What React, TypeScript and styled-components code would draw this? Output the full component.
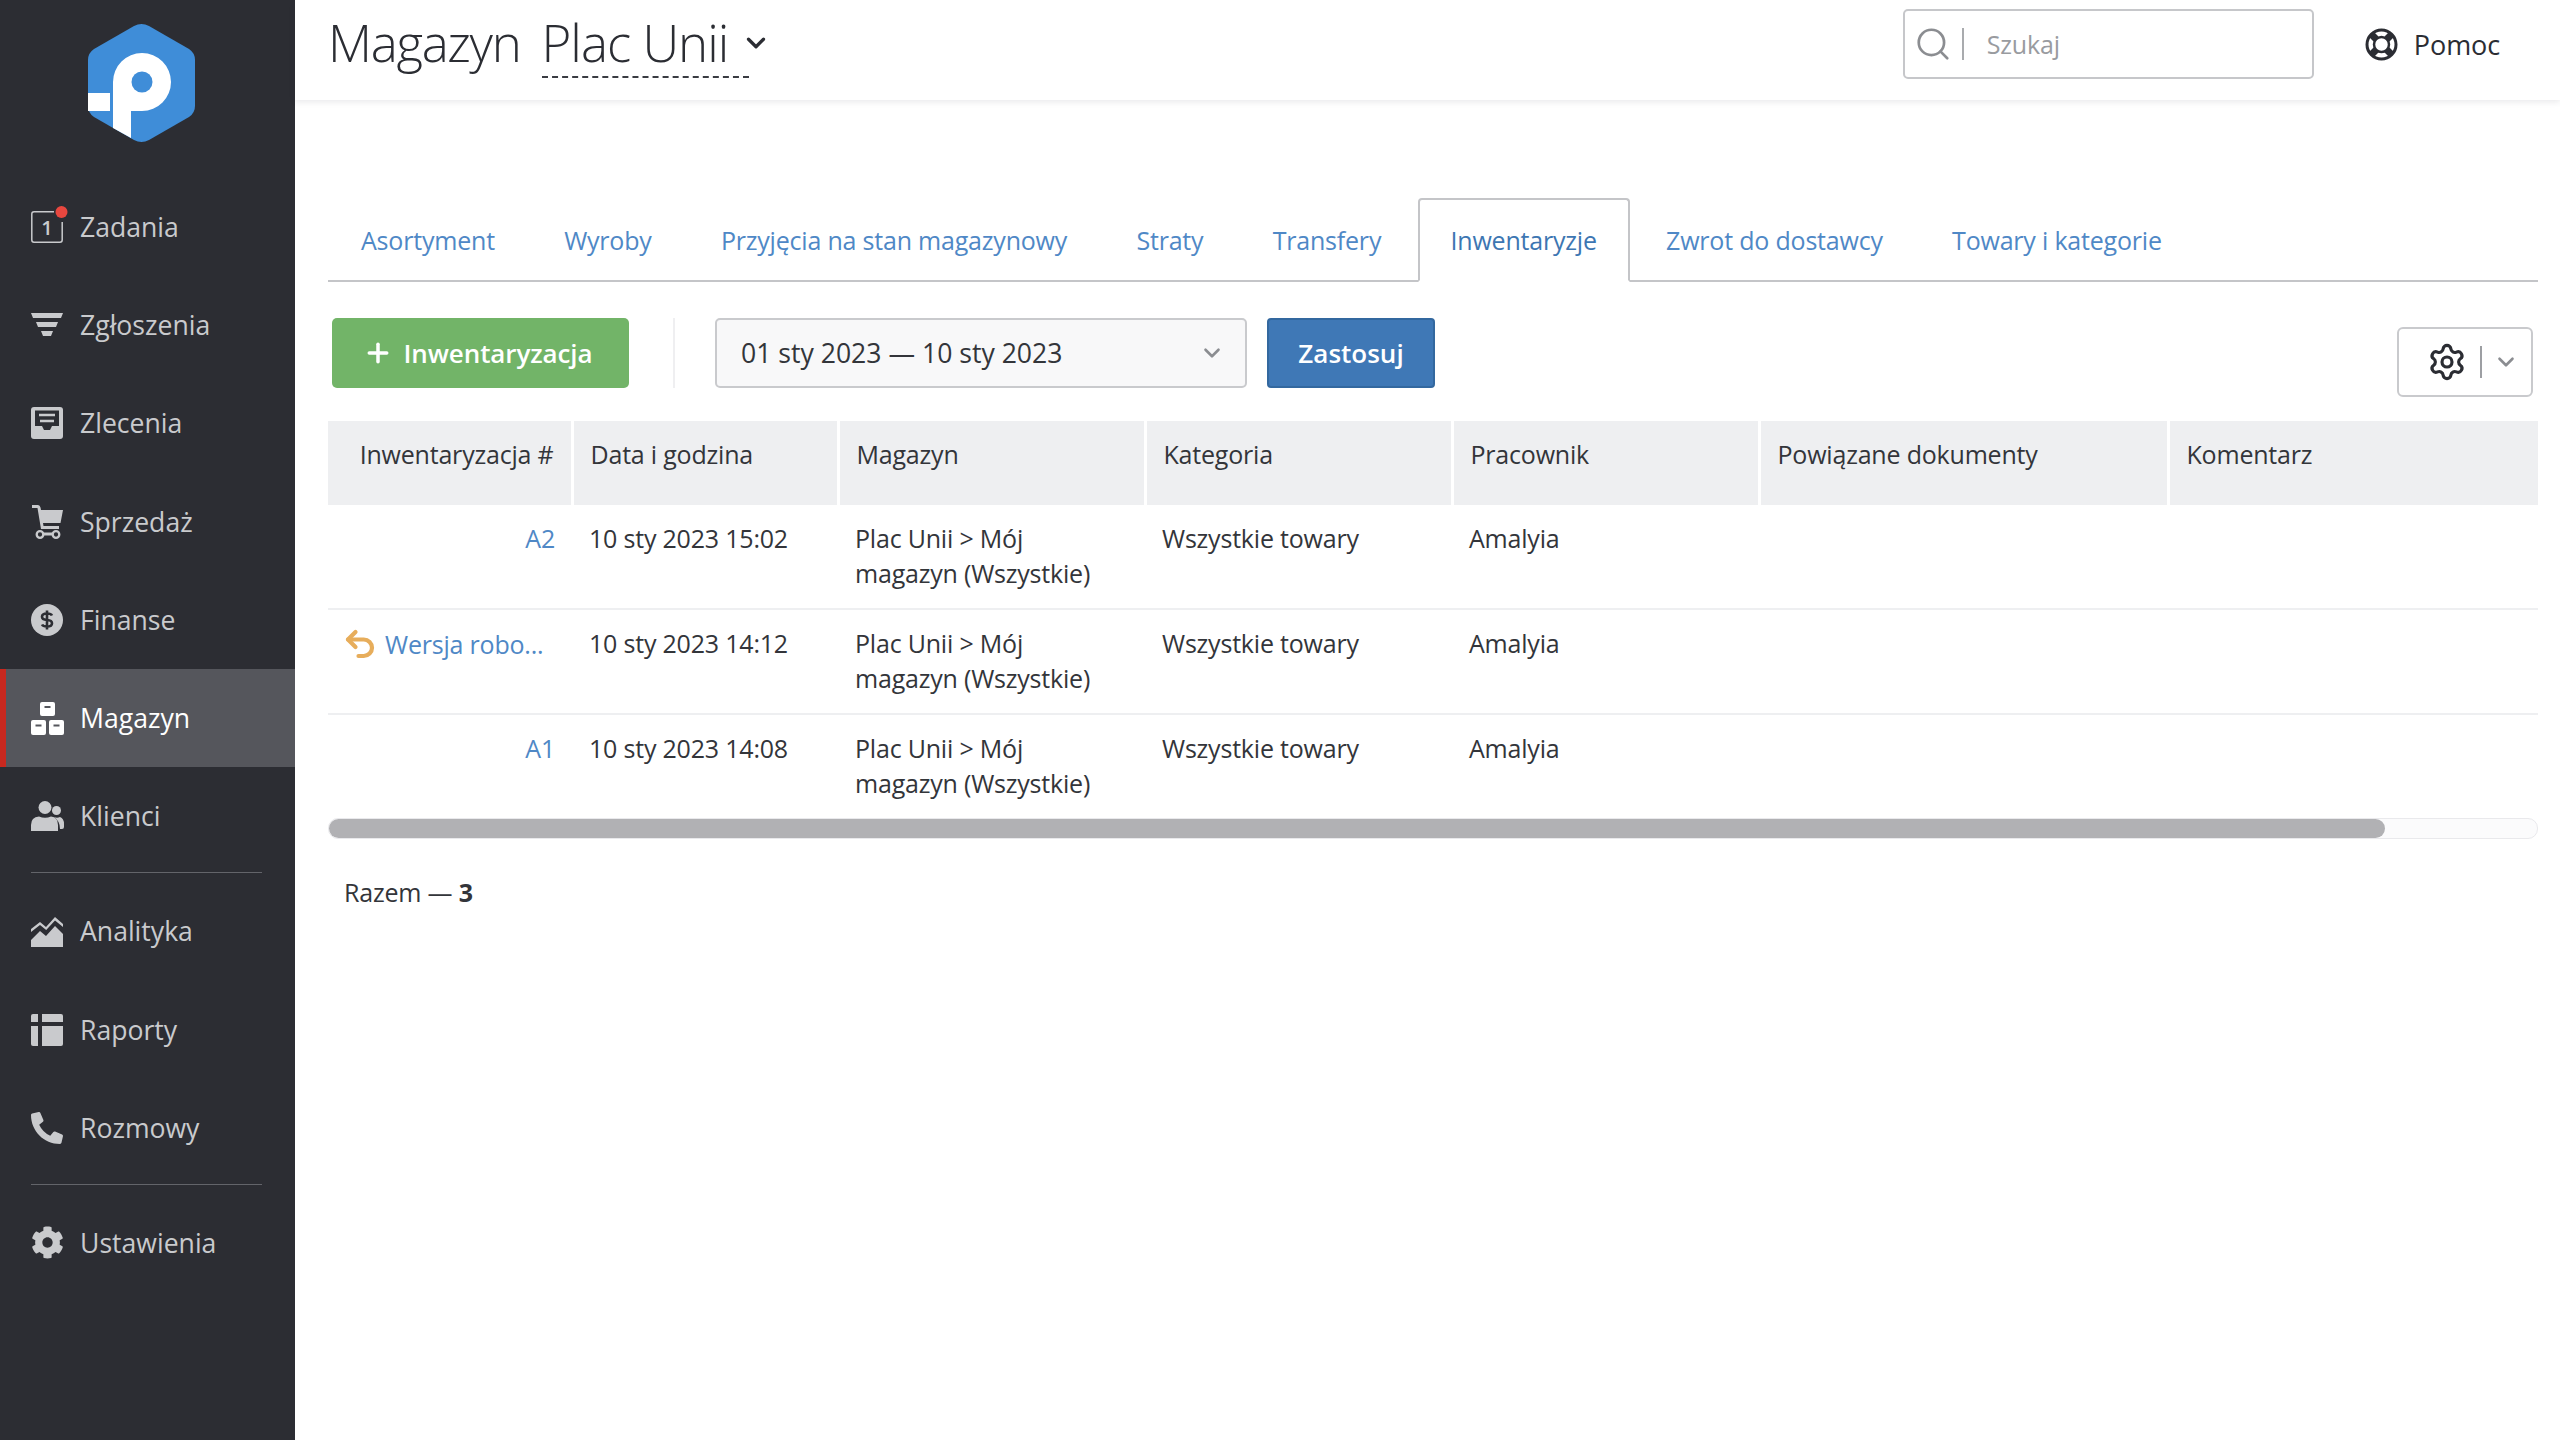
import React from 'react';
import styled, { createGlobalStyle } from 'styled-components';
import { ChevronDown, Plus, Search, Settings, Undo2 } from 'lucide-react';
import { FaCog, FaPhoneAlt } from 'react-icons/fa';

const Global = createGlobalStyle`
  html, body { margin: 0; padding: 0; background: #fff; }
  body { font-family: "Open Sans", "Liberation Sans", sans-serif; color: #33353a; }
  * { box-sizing: border-box; }
`;

const Shell = styled.div`
  display: flex;
  width: 2560px;
  height: 1440px;
  overflow: hidden;
`;

const Sidebar = styled.aside`
  flex: 0 0 295px;
  background: #2c2d33;
  display: flex;
  flex-direction: column;
`;

const LogoBox = styled.div`
  height: 178px;
  padding: 23px 0 0 88px;
`;

const NavItem = styled.div<{ $active?: boolean }>`
  height: 98.2px;
  display: flex;
  align-items: center;
  gap: 17px;
  padding: 0 0 0 31px;
  font-size: 26.6px;
  color: ${p => (p.$active ? '#ffffff' : '#c9cacd')};
  background: ${p => (p.$active ? '#55565c' : 'transparent')};
  box-shadow: ${p => (p.$active ? 'inset 6px 0 0 #c8281f' : 'none')};
`;

const NavIcon = styled.span`
  flex: 0 0 32px;
  width: 32px;
  height: 36px;
  display: flex;
  align-items: center;
  justify-content: center;
  svg { display: block; overflow: visible; }
`;

const NavDivider = styled.div`
  width: 231px;
  height: 1px;
  margin: 7px 0 9px 31px;
  background: #63646a;
`;

const Main = styled.main`
  flex: 1;
  min-width: 0;
  display: flex;
  flex-direction: column;
`;

const Header = styled.header`
  flex: 0 0 100px;
  display: flex;
  align-items: flex-start;
  padding: 8px 60px 0 33px;
  box-shadow: 0 2px 6px rgba(40, 44, 60, 0.1);
`;

const Title = styled.h1`
  margin: 0;
  font-size: 51px;
  font-weight: 300;
  line-height: 68px;
  letter-spacing: -1.3px;
  color: #2b2d33;
`;

const StoreSelect = styled.div`
  display: flex;
  align-items: center;
  margin-left: 21px;
`;

const StoreName = styled.span`
  font-size: 51px;
  font-weight: 300;
  line-height: 68px;
  letter-spacing: -1px;
  color: #2b2d33;
  padding-right: 21px;
  border-bottom: 2px dashed #3a3c42;
`;

const StoreChevron = styled.span`
  display: flex;
  margin-left: -8px;
  color: #2b2d33;
`;

const HeaderRight = styled.div`
  margin: 1px 0 0 auto;
  height: 70px;
  display: flex;
  align-items: center;
`;

const SearchBox = styled.div`
  width: 411px;
  height: 70px;
  border: 2px solid #c6c7ca;
  border-radius: 5px;
  display: flex;
  align-items: center;
  padding-left: 9px;
  color: #8b8d91;
`;

const SearchSep = styled.span`
  width: 2px;
  height: 32px;
  margin: 0 23px 0 10px;
  background: #a9abae;
`;

const Placeholder = styled.span`
  font-size: 25px;
  letter-spacing: -0.2px;
  color: #999b9f;
`;

const Help = styled.div`
  display: flex;
  align-items: center;
  gap: 15.5px;
  margin-left: 51.5px;
  font-size: 27px;
  letter-spacing: -0.1px;
  color: #2b2d33;
`;

const Content = styled.div`
  padding: 98px 22px 0 33px;
`;

const Tabs = styled.nav`
  display: flex;
  height: 84px;
  border-bottom: 2px solid #c4c5c8;
`;

const Tab = styled.div<{ $active?: boolean }>`
  height: ${p => (p.$active ? '84px' : '82px')};
  padding: 0 31px 1px;
  margin-right: 3.3px;
  display: flex;
  align-items: center;
  font-size: 25px;
  letter-spacing: -0.2px;
  color: ${p => (p.$active ? '#3d76b2' : '#4f88c6')};
  background: #fff;
  border: 2px solid ${p => (p.$active ? '#c4c5c8' : 'transparent')};
  border-bottom: ${p => (p.$active ? '2px solid #fff' : '0')};
  border-radius: ${p => (p.$active ? '4px 4px 0 0' : '0')};
`;

const Toolbar = styled.div`
  display: flex;
  align-items: flex-start;
  margin-top: 36px;
  height: 103px;
  padding: 0 5px 0 4px;
`;

const AddButton = styled.div`
  width: 297px;
  height: 70px;
  padding-right: 5px;
  background: #72b468;
  border-radius: 5px;
  color: #fff;
  display: flex;
  align-items: center;
  justify-content: center;
  gap: 10px;
  font-size: 26px;
  font-weight: 600;
  letter-spacing: -0.1px;
`;

const ToolSep = styled.div`
  width: 2px;
  height: 70px;
  margin: 0 40px 0 44px;
  background: #efeff1;
`;

const DateSelect = styled.div`
  width: 532px;
  height: 70px;
  border: 2px solid #c9cacd;
  border-radius: 5px;
  background: #f8f8f9;
  display: flex;
  align-items: center;
  justify-content: space-between;
  padding: 0 20px 0 24px;
  font-size: 26.6px;
  color: #33353a;
`;

const ApplyButton = styled.div`
  width: 168px;
  height: 70px;
  margin-left: 20px;
  background: #3f78b6;
  border: 2px solid #33689f;
  border-radius: 4px;
  color: #fff;
  display: flex;
  align-items: center;
  justify-content: center;
  font-size: 26px;
  font-weight: 600;
`;

const ColumnsButton = styled.div`
  width: 136px;
  height: 70px;
  margin: 9px 0 0 auto;
  border: 2px solid #c9cacd;
  border-radius: 6px;
  display: flex;
  align-items: center;
  justify-content: flex-end;
  padding-right: 12px;
  color: #2b2d33;
`;

const ColumnsSep = styled.span`
  width: 2px;
  height: 32px;
  margin: 0 11px 0 13px;
  background: #9d9fa3;
`;

const Table = styled.table`
  width: 2210px;
  table-layout: fixed;
  border-collapse: collapse;
  font-size: 25px;
  letter-spacing: -0.2px;
  line-height: 35px;
`;

const Th = styled.th<{ $right?: boolean }>`
  height: 84px;
  padding: 16px 17px 33px 17px;
  background: #eeeff1;
  border-right: 3px solid #fff;
  font-weight: 400;
  vertical-align: top;
  text-align: ${p => (p.$right ? 'right' : 'left')};
  color: #33353a;
  white-space: nowrap;
  &:last-child { border-right: 0; }
`;

const Td = styled.td<{ $right?: boolean }>`
  padding: 16px 17px 17px 17px;
  vertical-align: top;
  text-align: ${p => (p.$right ? 'right' : 'left')};
  color: #33353a;
`;

const Tr = styled.tr`
  border-bottom: 2px solid #eeeff1;
  &:last-child { border-bottom: 0; }
`;

const DocLink = styled.span`
  color: #4f88c6;
  white-space: nowrap;
`;

const DraftLink = styled.span`
  display: flex;
  align-items: center;
  gap: 7px;
  margin-left: -3px;
  color: #4f88c6;
  white-space: nowrap;
  svg { flex: none; color: #e7ad5b; }
`;

const ScrollTrack = styled.div`
  height: 21px;
  border: 1px solid #e9e9ec;
  border-radius: 10px;
  background: #fbfbfc;
`;

const ScrollThumb = styled.div`
  width: 2056px;
  height: 19px;
  border-radius: 10px;
  background: #b1b1b4;
`;

const Total = styled.div`
  margin-top: 36px;
  padding-left: 16px;
  font-size: 25px;
  letter-spacing: -0.2px;
  line-height: 35px;
  color: #33353a;
  b { font-weight: 700; }
`;

const ICON = '#c9cacd';
const DARK = '#2c2d33';

const Logo = () => (
  <svg width="107" height="120" viewBox="0 0 107 120">
    <path
      d="M46 3 Q53.500 -1 61 3 L101 26 Q107 30 107 37 L107 83 Q107 90 101 94 L61 117 Q53.500 121 46 117 L6 94 Q0 90 0 83 L0 37 Q0 30 6 26 Z"
      fill="#3f8dd8"
    />
    <path
      d="M25 59 A29 29 0 1 1 54 88 L43 88 L43 115 L25 105 Z M0 70 L22 70 L22 88 L0 88 Z"
      fill="#fff"
    />
    <circle cx="54" cy="59" r="10.500" fill="#3f8dd8" />
  </svg>
);

const TasksIcon = () => (
  <svg width="32" height="32" viewBox="0 0 32 32">
    <path d="M23 .8 H3 Q.8 .8 .8 3 V29 Q.8 31.200 3 31.200 H29 Q31.200 31.200 31.200 29 V11" fill="none" stroke={ICON} strokeWidth="1.500" />
    <text x="16" y="24" textAnchor="middle" fontFamily="Open Sans, sans-serif" fontSize="20" fontWeight="600" fill={ICON}>1</text>
    <circle cx="30.500" cy="1" r="6" fill="#e8473f" />
  </svg>
);

const FilterIcon = () => (
  <svg width="32" height="24" viewBox="0 0 32 24" fill={ICON}>
    <path d="M0 0 H32 L30 5 H2 Z" />
    <path d="M5 9 H27 L25 14 H7 Z" />
    <path d="M10 18 H22 L20 23 H12 Z" />
  </svg>
);

const OrdersIcon = () => (
  <svg width="32" height="32" viewBox="0 0 32 32">
    <rect width="32" height="32" rx="3" fill={ICON} />
    <path d="M4 3.500 H28 V19 H21 L19 23 H13 L11 19 H4 Z" fill={DARK} />
    <path d="M8 8 H24 M9 14 H23" stroke={ICON} strokeWidth="2.500" />
  </svg>
);

const CartIcon = () => (
  <svg width="31" height="35" viewBox="0 0 31 35" fill={ICON}>
    <path d="M0 1 H6 Q8 1 8.500 3.500 L9 6 H31 L28.500 19 H11 L11.500 22 H27 V25 H9 L5.500 4 H0 Z" />
    <circle cx="8" cy="30.500" r="3.300" fill="none" stroke={ICON} strokeWidth="2.300" />
    <circle cx="24" cy="30.500" r="3.300" fill="none" stroke={ICON} strokeWidth="2.300" />
    <path d="M11 28.500 H21 V31.500 H11 Z" />
  </svg>
);

const FinanceIcon = () => (
  <svg width="32" height="32" viewBox="0 0 32 32">
    <circle cx="16" cy="16" r="16" fill={ICON} />
    <path d="M21 11.500 Q20 9.500 16 9.500 Q11 9.500 11 12.800 Q11 15.700 16 16 Q21 16.300 21 19.200 Q21 22.500 16 22.500 Q12 22.500 11 20.500 M16 6.500 V25.500" fill="none" stroke={DARK} strokeWidth="2.600" />
  </svg>
);

const StockIcon = () => (
  <svg width="33" height="33" viewBox="0 0 33 33">
    <g fill="#fff">
      <rect x="9" y="0" width="15" height="14" rx="2" />
      <rect x="0" y="18" width="15" height="15" rx="2" />
      <rect x="18" y="18" width="15" height="15" rx="2" />
    </g>
    <path d="M13.500 5 H19.500 M4.500 23.500 H10.500 M22.500 23.500 H28.500" stroke="#55565c" strokeWidth="2.200" />
  </svg>
);

const ClientsIcon = () => (
  <svg width="33" height="30" viewBox="0 0 33 30" fill={ICON}>
    <circle cx="14" cy="6.500" r="6.500" />
    <path d="M0 30 V24 Q0 16 8 15.500 Q14 18 20 15.500 Q27 16 27 24 V30 Z" />
    <circle cx="25.500" cy="9.500" r="4.500" />
    <path d="M23 16 Q26 17.500 29 16 Q33 17.500 33 23 V26 Q33 28 31 28 H29 Q29 20 23 16 Z" />
  </svg>
);

const ChartIcon = () => (
  <svg width="32" height="31" viewBox="0 0 32 31" fill={ICON}>
    <path d="M0 13 L9 6 L15 11 L24 1 L32 8 V11 L24 4.500 L15.200 14 L9 9 L0 16 Z" />
    <path d="M0 31 V24 L9 15 L15 20 L24 10 L32 18 V31 Z" />
  </svg>
);

const ReportIcon = () => (
  <svg width="32" height="32" viewBox="0 0 32 32" fill={ICON}>
    <path d="M2 0 H7 V8 H0 V2 Q0 0 2 0 Z" />
    <path d="M11 0 H30 Q32 0 32 2 V8 H11 Z" />
    <path d="M0 12 H7 V32 H2 Q0 32 0 30 Z" />
    <path d="M11 12 H32 V30 Q32 32 30 32 H11 Z" />
  </svg>
);

const HelpIcon = () => (
  <svg width="33" height="33" viewBox="0 0 33 33">
    <circle cx="16.500" cy="16.500" r="14.500" fill="none" stroke="#2b2d33" strokeWidth="3" />
    <circle cx="16.500" cy="16.500" r="7.500" fill="none" stroke="#2b2d33" strokeWidth="2.500" />
    <path d="M6.500 6.500 L11 11 M26.500 6.500 L22 11 M6.500 26.500 L11 22 M26.500 26.500 L22 22" stroke="#2b2d33" strokeWidth="7" />
  </svg>
);

const NAV_TOP = [
  { label: 'Zadania', icon: <TasksIcon /> },
  { label: 'Zgłoszenia', icon: <FilterIcon /> },
  { label: 'Zlecenia', icon: <OrdersIcon /> },
  { label: 'Sprzedaż', icon: <CartIcon /> },
  { label: 'Finanse', icon: <FinanceIcon /> },
  { label: 'Magazyn', icon: <StockIcon />, active: true },
  { label: 'Klienci', icon: <ClientsIcon /> },
];
const NAV_MID = [
  { label: 'Analityka', icon: <ChartIcon /> },
  { label: 'Raporty', icon: <ReportIcon /> },
  { label: 'Rozmowy', icon: <FaPhoneAlt size={32} /> },
];

const TABS = ['Asortyment', 'Wyroby', 'Przyjęcia na stan magazynowy', 'Straty', 'Transfery', 'Inwentaryzje', 'Zwrot do dostawcy', 'Towary i kategorie'];
const COLS = [244, 266, 307, 307, 307, 409, 370];
const HEAD = ['Inwentaryzacja #', 'Data i godzina', 'Magazyn', 'Kategoria', 'Pracownik', 'Powiązane dokumenty', 'Komentarz'];
const ROWS = [
  { id: 'A2', date: '10 sty 2023 15:02' },
  { id: 'Wersja robo...', date: '10 sty 2023 14:12', draft: true },
  { id: 'A1', date: '10 sty 2023 14:08' },
];

const Nav = ({ label, icon, active }: { label: string; icon: React.ReactNode; active?: boolean }) => (
  <NavItem $active={active}>
    <NavIcon>{icon}</NavIcon>
    {label}
  </NavItem>
);

export default function App() {
  return (
    <Shell>
      <Global />
      <Sidebar>
        <LogoBox><Logo /></LogoBox>
        {NAV_TOP.map(n => <Nav key={n.label} {...n} />)}
        <NavDivider />
        {NAV_MID.map(n => <Nav key={n.label} {...n} />)}
        <NavDivider />
        <Nav label="Ustawienia" icon={<FaCog size={33} />} />
      </Sidebar>
      <Main>
        <Header>
          <Title>Magazyn</Title>
          <StoreSelect>
            <StoreName>Plac Unii</StoreName>
            <StoreChevron><ChevronDown size={30} strokeWidth={2.6} /></StoreChevron>
          </StoreSelect>
          <HeaderRight>
            <SearchBox>
              <Search size={38} strokeWidth={1.7} />
              <SearchSep />
              <Placeholder>Szukaj</Placeholder>
            </SearchBox>
            <Help><HelpIcon />Pomoc</Help>
          </HeaderRight>
        </Header>
        <Content>
          <Tabs>
            {TABS.map(t => <Tab key={t} $active={t === 'Inwentaryzje'}>{t}</Tab>)}
          </Tabs>
          <Toolbar>
            <AddButton><Plus size={30} strokeWidth={2.8} />Inwentaryzacja</AddButton>
            <ToolSep />
            <DateSelect>
              01 sty 2023 — 10 sty 2023
              <ChevronDown size={26} color="#8b8d91" strokeWidth={2.4} />
            </DateSelect>
            <ApplyButton>Zastosuj</ApplyButton>
            <ColumnsButton>
              <Settings size={40} strokeWidth={1.9} />
              <ColumnsSep />
              <ChevronDown size={26} color="#8b8d91" strokeWidth={2.4} />
            </ColumnsButton>
          </Toolbar>
          <Table>
            <colgroup>{COLS.map((c, i) => <col key={i} width={c} />)}</colgroup>
            <thead>
              <tr>{HEAD.map((h, i) => <Th key={h} $right={i === 0}>{h}</Th>)}</tr>
            </thead>
            <tbody>
              {ROWS.map(r => (
                <Tr key={r.id}>
                  <Td $right={!r.draft}>
                    {r.draft
                      ? <DraftLink><Undo2 size={36} strokeWidth={2.8} />{r.id}</DraftLink>
                      : <DocLink>{r.id}</DocLink>}
                  </Td>
                  <Td>{r.date}</Td>
                  <Td>Plac Unii &gt; Mój magazyn (Wszystkie)</Td>
                  <Td>Wszystkie towary</Td>
                  <Td>Amalyia</Td>
                  <Td />
                  <Td />
                </Tr>
              ))}
            </tbody>
          </Table>
          <ScrollTrack><ScrollThumb /></ScrollTrack>
          <Total>Razem — <b>3</b></Total>
        </Content>
      </Main>
    </Shell>
  );
}
